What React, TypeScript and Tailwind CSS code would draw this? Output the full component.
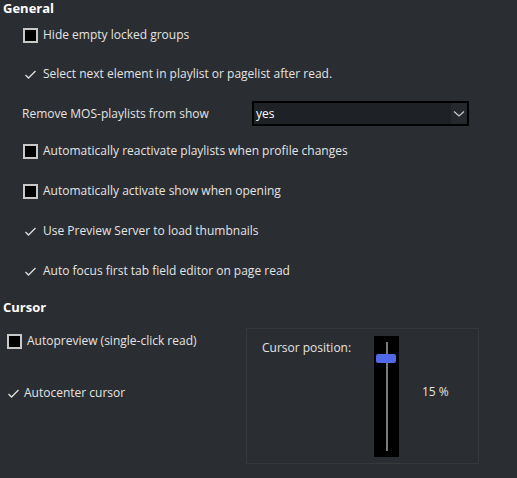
import React from "react";

const Box = () => (
  <span className="w-[15px] h-[15px] border-2 border-[#c8c8c8] bg-black shrink-0" />
);

const Tick = () => (
  <svg width="15" height="15" viewBox="0 0 15 15" className="shrink-0">
    <polyline points="2.5,8 5.5,11 12.5,4" fill="none" stroke="#e0e0e0" strokeWidth="1.3" />
  </svg>
);

const Row = ({ h, checked, box, children }: { h: string; checked?: boolean; box?: boolean; children: React.ReactNode }) => (
  <div className={`${h} flex items-center gap-[5px] pl-[23px]`}>
    {box ? <Box /> : checked ? <Tick /> : null}
    <span>{children}</span>
  </div>
);

const App = () => {
  return (
    <div
      className="w-[517px] h-[478px] bg-[#2a2d31] text-[#e4e4e4] text-[12px] overflow-hidden"
      style={{ fontFamily: '"Open Sans", "Noto Sans", sans-serif' }}
    >
      <div className="h-[18px] pl-[3px] flex items-center font-bold text-[13px] text-white">General</div>
      <Row h="h-[34px]" box>Hide empty locked groups</Row>
      <Row h="h-[44px]" checked>Select next element in playlist or pagelist after read.</Row>
      <div className="h-[35px] flex items-center pl-[22px]">
        <span className="w-[230px]">Remove MOS-playlists from show</span>
        <div className="w-[217px] h-[25px] border-2 border-black bg-[#1e2125] flex items-center">
          <span className="flex-1 pl-[2px] text-white">yes</span>
          <span className="w-[16px] h-full bg-[#25282c] flex items-center justify-center">
            <svg width="12" height="8" viewBox="0 0 12 8">
              <polyline points="1,1.5 6,6 11,1.5" fill="none" stroke="#c8c8c8" strokeWidth="1.3" />
            </svg>
          </span>
        </div>
      </div>
      <Row h="h-10" box>Automatically reactivate playlists when profile changes</Row>
      <Row h="h-10" box>Automatically activate show when opening</Row>
      <Row h="h-10" checked>Use Preview Server to load thumbnails</Row>
      <Row h="h-10" checked>Auto focus first tab field editor on page read</Row>

      <div className="h-[34px] pl-[3px] flex items-center font-bold text-[13px] text-white">Cursor</div>
      <div className="flex mt-[3px]">
        <div className="w-[246px] flex flex-col">
          <div className="h-[26px] flex items-center gap-[5px] pl-[7px]">
            <Box />
            <span>Autopreview (single-click read)</span>
          </div>
          <div className="h-[78px] flex items-center gap-[3px] pl-[6px]">
            <Tick />
            <span>Autocenter cursor</span>
          </div>
        </div>
        <div className="w-[233px] h-[136px] border border-[#36383c] flex pl-[15px]">
          <span className="w-[112px] mt-[10px] h-[18px] leading-[18px]">Cursor position:</span>
          <div className="relative w-[25px] h-[121px] mt-[7px] bg-black flex justify-center py-[6px]">
            <div className="w-[2px] h-full bg-[#7a7a7a]" />
            <div className="absolute left-[2px] top-[18px] w-[20px] h-[9px] rounded-[2px] bg-[#5069e6]" />
          </div>
          <span className="ml-[23px] mt-[54px] h-[18px] leading-[18px]">15 %</span>
        </div>
      </div>
    </div>
  );
};

export default App;
